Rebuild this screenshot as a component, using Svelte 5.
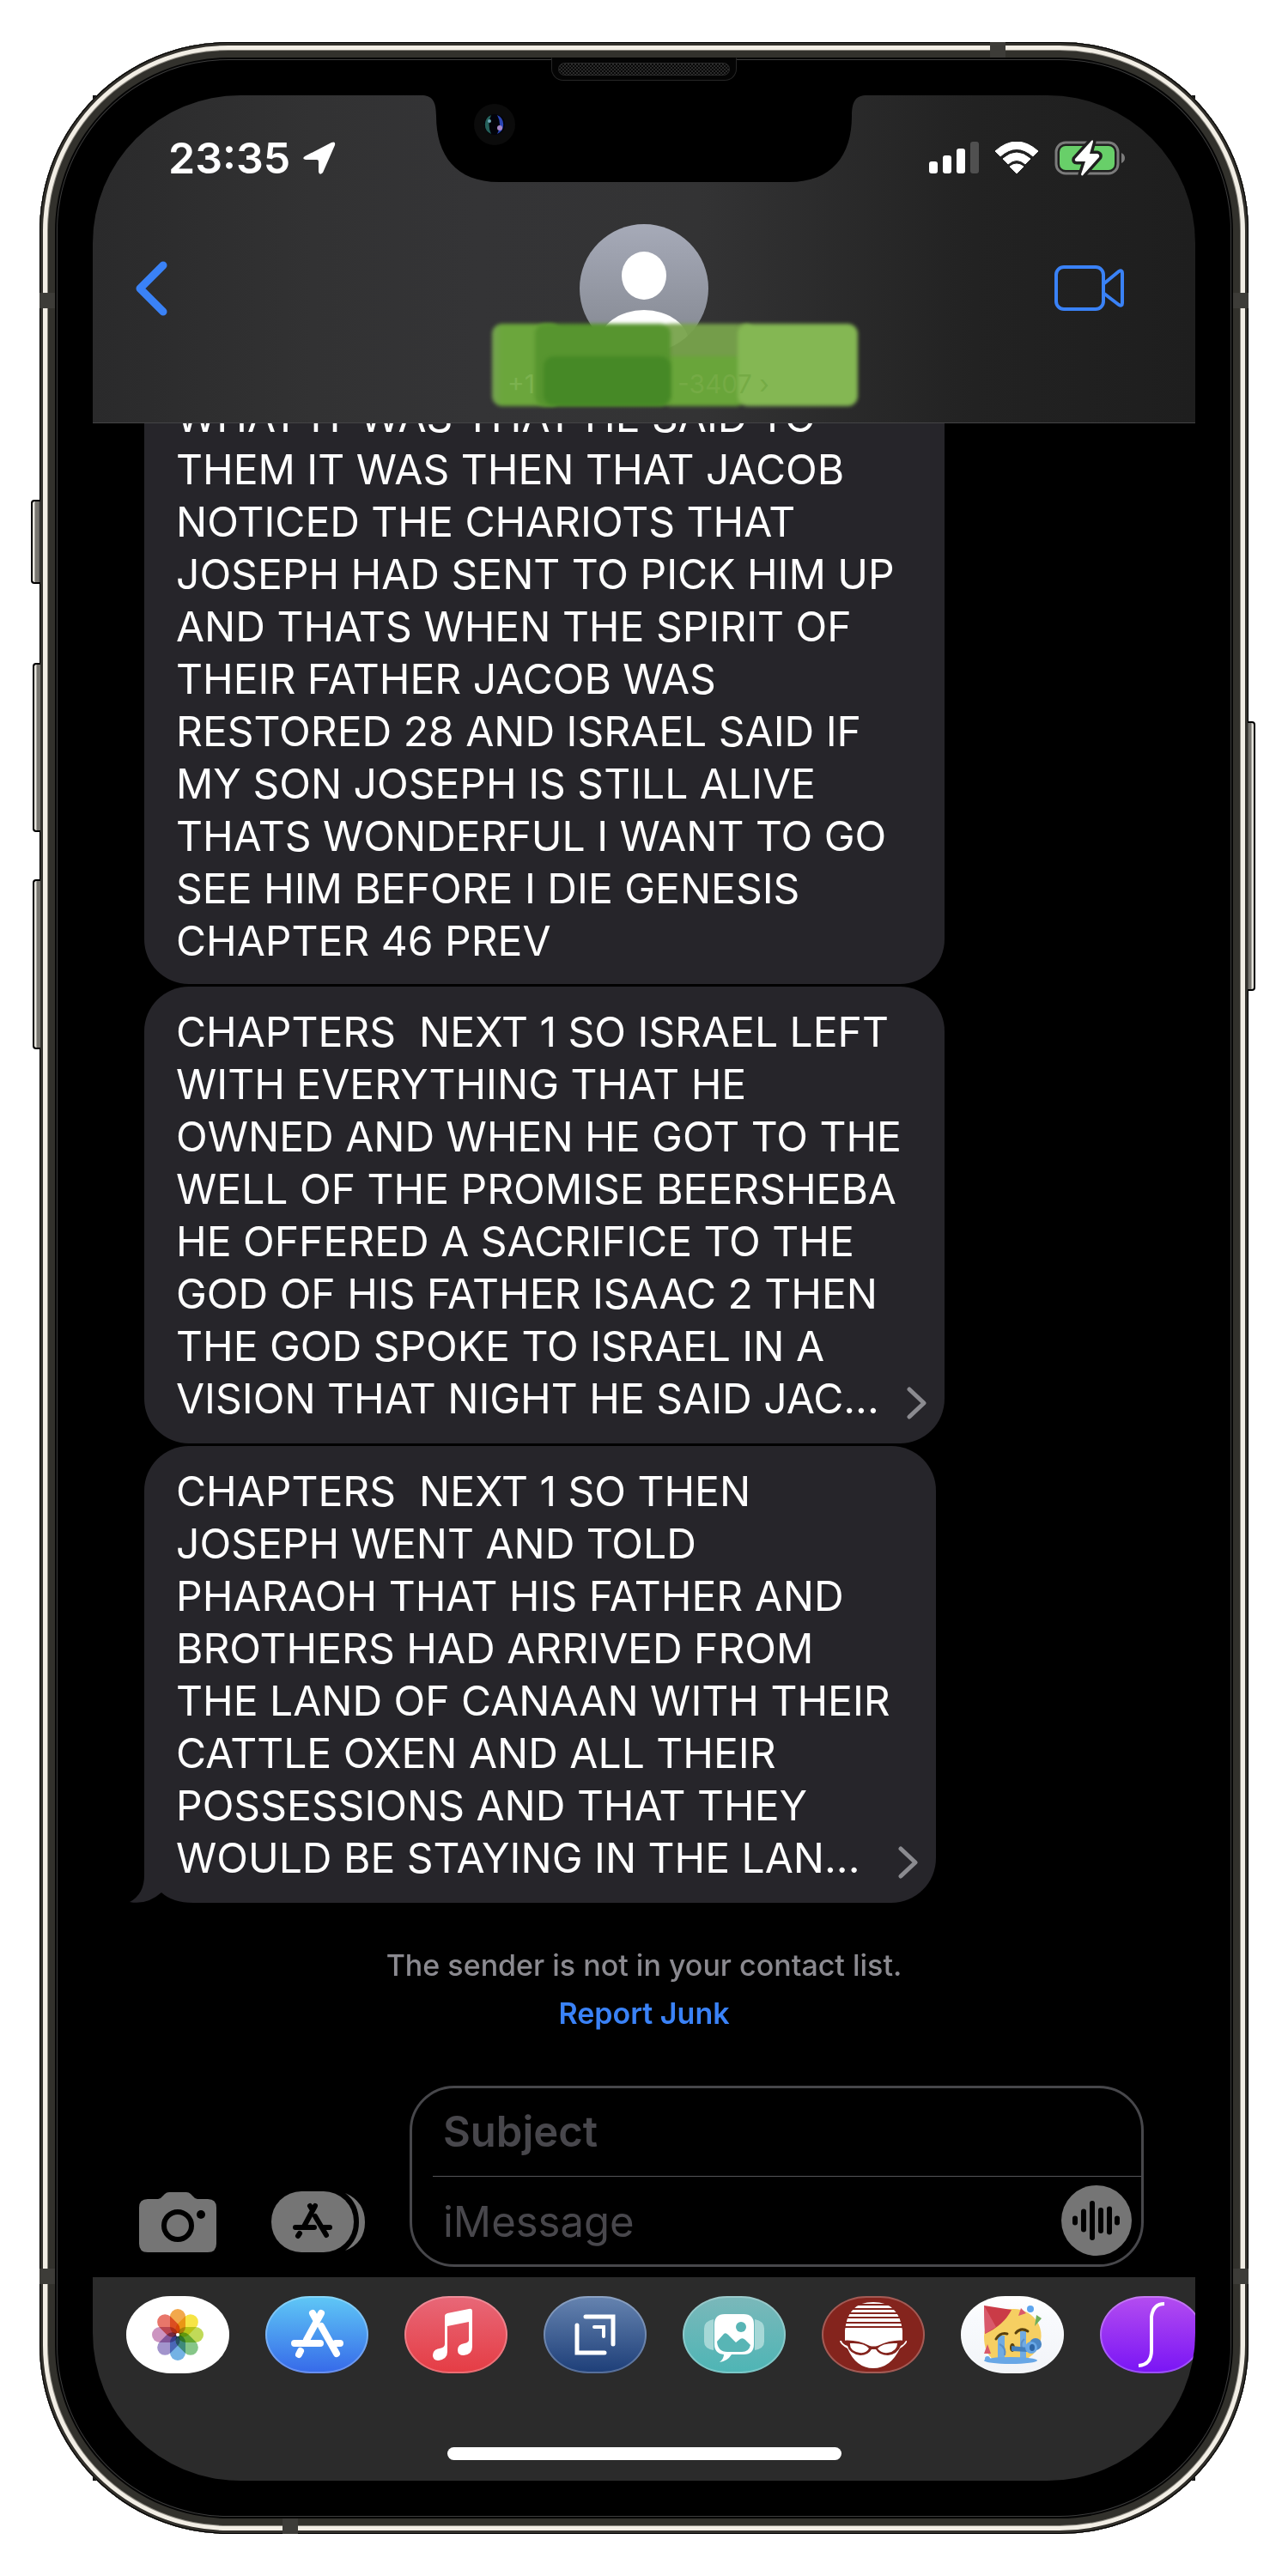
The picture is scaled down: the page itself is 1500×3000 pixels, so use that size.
<script>
  const messages = [
    {
      kind: 'cut',
      more: false,
      lines: [
        'WHAT IT WAS THAT HE SAID TO',
        'THEM IT WAS THEN THAT JACOB',
        'NOTICED THE CHARIOTS THAT',
        'JOSEPH HAD SENT TO PICK HIM UP',
        'AND THATS WHEN THE SPIRIT OF',
        'THEIR FATHER JACOB WAS',
        'RESTORED 28 AND ISRAEL SAID IF',
        'MY SON JOSEPH IS STILL ALIVE',
        'THATS WONDERFUL I WANT TO GO',
        'SEE HIM BEFORE I DIE GENESIS',
        'CHAPTER 46 PREV'
      ]
    },
    {
      kind: 'middle',
      more: true,
      lines: [
        'CHAPTERS  NEXT 1 SO ISRAEL LEFT',
        'WITH EVERYTHING THAT HE',
        'OWNED AND WHEN HE GOT TO THE',
        'WELL OF THE PROMISE BEERSHEBA',
        'HE OFFERED A SACRIFICE TO THE',
        'GOD OF HIS FATHER ISAAC 2 THEN',
        'THE GOD SPOKE TO ISRAEL IN A',
        'VISION THAT NIGHT HE SAID JAC...'
      ]
    },
    {
      kind: 'last',
      more: true,
      lines: [
        'CHAPTERS  NEXT 1 SO THEN',
        'JOSEPH WENT AND TOLD',
        'PHARAOH THAT HIS FATHER AND',
        'BROTHERS HAD ARRIVED FROM',
        'THE LAND OF CANAAN WITH THEIR',
        'CATTLE OXEN AND ALL THEIR',
        'POSSESSIONS AND THAT THEY',
        'WOULD BE STAYING IN THE LAN...'
      ]
    }
  ];

  const petals = ['#f2a84c', '#f6e445', '#c0da58', '#86c688', '#74b2e4', '#a294cc', '#cc94c0', '#e8766a'];
  const wave = [
    [16, 11], [26, 27], [36, 46], [46, 30], [56, 33], [65, 11]
  ];
</script>

<div class="page">
  <div class="phone">
    <i class="key k1"></i><i class="key k2"></i><i class="key k3"></i><i class="key k4"></i>
    <i class="band side left high"></i><i class="band side right high"></i>
    <i class="band side left low"></i><i class="band side right low"></i>
    <i class="band edge top"></i><i class="band edge bottom"></i>
    <div class="speaker"><span></span></div>

    <main class="screen">
      <header>
        <svg class="notch" viewBox="0 0 514 101" aria-hidden="true">
          <path d="M0 0C11 1 15 8 15 24C15 70 38 101 88 101H426C476 101 499 70 499 24C499 8 503 1 514 0Z" fill="#000" />
          <circle cx="83" cy="34" r="24" fill="#0b0b0b" />
          <circle cx="83" cy="34" r="12" fill="#02030a" />
          <path d="M79 23A12 12 0 0 0 79 45Q74 34 79 23" fill="#25605a" />
          <path d="M86 23A12 12 0 0 1 86 45Q92 34 86 23" fill="#2b45b4" />
          <circle cx="77" cy="30" r="2" fill="#6fa8b8" />
          <circle cx="89" cy="38" r="3" fill="#a687c8" />
        </svg>
        <div class="status">
          <div class="clock">
            <span>23:35</span>
            <svg width="40" height="40" viewBox="0 0 40 40" aria-hidden="true">
              <path d="M3 18L34 2Q39 0 38 5L24 37Q20 41 19 36V24Q19 22 17 22H4Q-1 21 3 18Z" fill="#fff" />
            </svg>
          </div>
          <div class="radios">
            <svg width="58" height="38" viewBox="0 0 58 38" aria-hidden="true">
              <rect x="0" y="23" width="10" height="14" rx="3" fill="#fff" />
              <rect x="16" y="16" width="10" height="21" rx="3" fill="#fff" />
              <rect x="32" y="8" width="10" height="29" rx="3" fill="#fff" />
              <rect x="48" y="0" width="10" height="37" rx="3" fill="#505050" />
            </svg>
            <svg width="52" height="38" viewBox="0 0 52 38" aria-hidden="true">
              <path d="M1 11Q26 -11 51 11L45 17Q26 0 7 17Z" fill="#fff" stroke="#fff" stroke-linejoin="round" />
              <path d="M10 20Q26 6 42 20L36 26Q26 17 16 26Z" fill="#fff" stroke="#fff" stroke-linejoin="round" />
              <path d="M18 29Q26 23 34 29L26 37Z" fill="#fff" stroke="#fff" stroke-linejoin="round" />
            </svg>
            <svg width="83" height="42" viewBox="0 0 83 42" aria-hidden="true">
              <rect x="2" y="3" width="72" height="36" rx="11" fill="none" stroke="#7b7b7b" stroke-width="3" />
              <path d="M78 15Q82 17 82 21Q82 25 78 27Z" fill="#7b7b7b" />
              <rect x="6" y="7" width="64" height="28" rx="7" fill="#68cf69" />
              <path d="M43 1L24 22Q23 25 26 25H36L31 40Q32 43 34 40L52 20Q53 17 50 16H41L45 2Q45 -1 43 1Z" fill="#fff" stroke="#202020" stroke-width="7" stroke-linejoin="round" paint-order="stroke" />
            </svg>
          </div>
        </div>
        <nav>
          <button class="plain" aria-label="Back">
            <svg width="38" height="64" viewBox="0 0 38 64"><path d="M33 5L6 32L33 59" fill="none" stroke="#3a82f7" stroke-width="9" stroke-linecap="round" stroke-linejoin="round" /></svg>
          </button>
          <div class="contact">
            <svg width="150" height="150" viewBox="0 0 150 150" aria-hidden="true">
              <defs>
                <linearGradient id="av" x1="0" y1="0" x2="0" y2="1"><stop offset="0" stop-color="#a6aab8" /><stop offset="1" stop-color="#82868f" /></linearGradient>
                <clipPath id="avc"><circle cx="75" cy="75" r="75" /></clipPath>
              </defs>
              <g clip-path="url(#avc)">
                <rect width="150" height="150" fill="url(#av)" />
                <ellipse cx="75" cy="60" rx="26" ry="28" fill="#fff" />
                <ellipse cx="75" cy="138" rx="52" ry="38" fill="#fff" />
              </g>
            </svg>
            <div class="marker">
              <i class="m1"></i><i class="m3"></i><i class="m4"></i><i class="m2"></i><i class="m5"></i><i class="m6"></i>
              <span class="pre">+1</span><span class="post">-3407 ›</span>
            </div>
          </div>
          <button class="plain" aria-label="Video call">
            <svg width="82" height="56" viewBox="0 0 82 56"><g fill="none" stroke="#3a82f7" stroke-width="4" stroke-linejoin="round"><rect x="3" y="3" width="55" height="49" rx="9" /><path d="M59 22L76 8Q80 6 80 10V45Q80 49 76 47L59 34" /></g></svg>
          </button>
        </nav>
      </header>

      <section class="thread">
        {#each messages as m}
          <div class="bubble {m.kind}">
            {#if m.kind === 'last'}
              <svg class="tail" width="74" height="50" viewBox="0 0 74 50" aria-hidden="true">
                <path d="M17 0V18Q17 40 0 49Q20 53 37 38Q50 50 74 50V0Z" fill="#26252a" />
              </svg>
            {/if}
            <p>{m.lines.join('\n')}</p>
            {#if m.more}
              <button class="plain more" aria-label="Show full message">
                <svg width="24" height="38" viewBox="0 0 24 38"><path d="M3 3L20 19L3 35" fill="none" stroke="#8b8b90" stroke-width="5" stroke-linecap="round" stroke-linejoin="round" /></svg>
              </button>
            {/if}
          </div>
        {/each}
      </section>

      <div class="notice">
        <p>The sender is not in your contact list.</p>
        <a href="#junk">Report Junk</a>
      </div>

      <form class="composer" onsubmit={(e) => e.preventDefault()}>
        <button type="button" class="plain tool" aria-label="Camera">
          <svg width="90" height="70" viewBox="0 0 90 70">
            <path d="M10 8H22Q25 8 27 5L30 2Q32 0 35 0H55Q58 0 60 2L63 5Q65 8 68 8H80Q90 8 90 18V60Q90 70 80 70H10Q0 70 0 60V18Q0 8 10 8Z" fill="#757575" />
            <circle cx="45" cy="39" r="16" fill="none" stroke="#000" stroke-width="6" />
            <circle cx="72" cy="26" r="5" fill="#000" />
          </svg>
        </button>
        <button type="button" class="plain tool apps" aria-label="Apps">
          <svg width="110" height="72" viewBox="0 0 110 72">
            <rect x="0" y="0" width="96" height="71" rx="35" fill="#757575" />
            <path d="M86 2Q109 12 109 36Q109 60 86 69Q102 56 102 36Q102 14 86 2Z" fill="#757575" />
            <g stroke="#000" stroke-width="6" stroke-linecap="round" fill="none">
              <path d="M51 17L38 41M45 17L48 22M51 29L64 51M28 42H50M60 42H68M33 49L31 52" />
            </g>
          </svg>
        </button>
        <div class="box">
          <input class="subject" aria-label="Subject" placeholder="Subject" />
          <hr />
          <div class="line">
            <input aria-label="iMessage" placeholder="iMessage" />
            <button type="button" class="plain mic" aria-label="Record audio">
              <svg width="82" height="82" viewBox="0 0 82 82">
                <circle cx="41" cy="41" r="41" fill="#757575" />
                {#each wave as [x, h]}
                  <rect x={x - 3} y={41 - h / 2} width="6" height={h} rx="3" fill="#000" />
                {/each}
              </svg>
            </button>
          </div>
        </div>
      </form>

      <footer>
        <div class="dock">
          <button class="app photos" aria-label="Photos">
            <svg viewBox="0 0 120 90">
              <g class="petals">
                {#each petals as c, i}
                  <rect x="51" y="15" width="18" height="30" rx="9" fill={c} transform="rotate({i * 45} 60 45)" />
                {/each}
              </g>
              <circle cx="60" cy="45" r="2" fill="#fff" />
            </svg>
          </button>
          <button class="app store" aria-label="App Store">
            <svg viewBox="0 0 120 90">
              <g stroke="#fff" stroke-width="8" stroke-linecap="round" fill="none">
                <path d="M65 20L48 51M55 20L60 29M34 55H64M82 55H87M41 64L39 68" />
                <path d="M65 35L83 67" />
              </g>
            </svg>
          </button>
          <button class="app music" aria-label="Music">
            <svg viewBox="0 0 120 90">
              <path d="M47 23Q47 21 50 20L75 15Q79 14 79 18V59Q79 68 69 69Q62 69 62 63Q62 56 70 55Q75 54 75 51V30L50 35V65Q50 73 40 75Q33 75 33 69Q33 62 41 61Q47 60 47 56Z" fill="#fff" />
            </svg>
          </button>
          <button class="app drafts" aria-label="Screens">
            <svg viewBox="0 0 120 90">
              <g fill="none" stroke="#fff" stroke-linecap="round"><path d="M49 24H81V56M39 34V66H71" stroke-width="5" /><path d="M59 36H70V47" stroke-width="4" /></g>
            </svg>
          </button>
          <button class="app stickers" aria-label="Stickers">
            <svg viewBox="0 0 120 90">
              <path d="M36 27Q25 29 25 38V53Q25 61 36 63ZM84 27Q95 29 95 38V53Q95 61 84 63Z" fill="#a6d8d7" />
              <path d="M49 21H71Q83 21 83 33V56Q83 68 71 68H57Q52 76 43 77Q48 73 48 68Q37 67 37 56V33Q37 21 49 21Z" fill="#fff" />
              <circle cx="68" cy="36" r="6" fill="#58b5b5" />
              <path d="M40 53L48 44Q50 42 53 45L62 54L67 50Q70 48 73 51L79 57Q77 65 69 65H52Q41 65 40 53Z" fill="#58b5b5" />
            </svg>
          </button>
          <button class="app heads" aria-label="Characters">
            <svg viewBox="0 0 120 90">
              <path d="M27 52V40Q30 7 60 7Q90 7 94 40V52L99 52Q100 55 91 61Q80 84 60 84Q40 84 30 61Q21 56 21 52Z" fill="#fff" />
              <path d="M40 10H80M34 15H86M30 20H90M28 25H92M27 31H94M27 36H94" stroke="#84241d" stroke-width="2" />
              <path d="M23 52Q40 50 56 58Q60 59 65 58Q82 50 98 52Q96 56 92 58Q88 68 77 69Q67 69 63 62H58Q54 69 45 69Q32 67 30 58Q24 56 23 52Z" fill="#84241d" />
              <path d="M33 55Q50 54 55 61Q52 67 44 66Q32 64 33 55ZM88 55Q71 54 65 61Q69 67 77 66Q88 64 88 55Z" fill="#fff" />
            </svg>
          </button>
          <button class="app party" aria-label="Emoji mix">
            <svg viewBox="0 0 120 90">
              <path d="M59 15A32 31 0 0 1 84 68L76 74H38Q27 66 27 47A32 32 0 0 1 59 15Z" fill="#f6cf62" />
              <path d="M27 11L59 16Q50 34 28 44Z" fill="#ca3b47" /><path d="M27 11L41 36L28 44Z" fill="#d9596b" />
              <path d="M43 46H51V73H43ZM69 41H76V73H69Z" fill="#70abe3" />
              <path d="M45 56Q53 60 51 69M74 50Q69 54 71 60" fill="none" stroke="#5c8fc7" stroke-width="2" />
              <ellipse cx="58" cy="75" rx="31" ry="4" fill="#68a7e6" /><circle cx="31" cy="73" r="3" fill="#68a7e6" />
              <path d="M41 50Q46 42 54 44M64 43Q70 36 78 41" fill="none" stroke="#59400d" stroke-width="3" stroke-linecap="round" />
              <ellipse cx="60" cy="60" rx="3" ry="5" fill="#59400d" />
              <path d="M59 58L78 60V65L59 64Z" fill="#437fbd" />
              <ellipse cx="87" cy="56" rx="7" ry="7" fill="#4a86c5" />
              <circle cx="82" cy="60" r="7" fill="#68a7e6" /><ellipse cx="83" cy="60" rx="3" ry="4" fill="#2d65a5" />
              <circle cx="81" cy="15" r="4" fill="#5da5ee" />
              <path d="M70 14L76 20L67 23ZM31 56L35 67H27Z" fill="#d9596b" /><path d="M88 22L94 26L86 35Z" fill="#6eae5a" />
            </svg>
          </button>
          <button class="app integral" aria-label="Calculator">
            <svg viewBox="0 0 120 90"><path d="M75 9Q62 9 60 24V63Q60 80 45 81" fill="none" stroke="#fff" stroke-width="4" /></svg>
          </button>
        </div>
        <div class="home"></div>
      </footer>
    </main>
  </div>
</div>

<style>
  :global(body) { background: #fff; }
  * { box-sizing: border-box; }
  p { margin: 0; }
  .page {
    font-family: Inter, 'Liberation Sans', sans-serif;
    padding: 49px 46px 50px;
  }
  .plain {
    display: block;
    padding: 0;
    border: 0;
    background: none;
    cursor: pointer;
  }
  svg { display: block; flex: none; }

  .phone {
    position: relative;
    padding: 62px;
    border-radius: 220px;
    background: #000;
    box-shadow:
      inset 0 0 0 1px #000,
      inset 0 0 0 4px #33312c,
      inset 0 0 0 9px #f2eee5,
      inset 0 0 0 10px #8b8880,
      inset 0 0 0 18px #32312c,
      inset 0 0 0 20px #050505,
      inset 0 0 0 21px #3c3c3c;
  }
  .phone::before {
    content: '';
    position: absolute;
    inset: 62px 62px;
    z-index: -1;
    background: #161616;
  }
  .key {
    position: absolute;
    width: 11px;
    left: -10px;
    border: 2px solid #000;
    border-right: 0;
    border-radius: 4px 0 0 4px;
    background: linear-gradient(90deg, #e5e3dc 0 2px, #77756f 3px 7px, #222);
  }
  .k1 { top: 533px; height: 98px; }
  .k2 { top: 723px; height: 197px; left: -8px; width: 9px; }
  .k3 { top: 975px; height: 198px; left: -8px; width: 9px; }
  .k4 {
    top: 791px;
    height: 314px;
    left: auto;
    right: -8px;
    width: 9px;
    border: 2px solid #000;
    border-left: 0;
    border-radius: 0 4px 4px 0;
    background: linear-gradient(270deg, #e5e3dc 0 2px, #77756f 3px 6px, #222);
  }
  .band { position: absolute; width: 18px; height: 18px; background: #3d3c38; }
  .left { left: 0; }
  .right { right: 0; }
  .high { top: 292px; }
  .low { bottom: 291px; }
  .top { top: 0; right: 283px; }
  .bottom { bottom: 0; left: 283px; }
  .speaker {
    position: absolute;
    top: 18px;
    left: 50%;
    width: 216px;
    height: 27px;
    margin-left: -108px;
    padding: 5px 7px;
    border: 1px solid #262626;
    border-top-color: #000;
    border-radius: 0 0 14px 14px;
    background: #040404;
  }
  .speaker span {
    display: block;
    height: 15px;
    border: 1px solid #2a2a2a;
    border-radius: 8px;
    background: repeating-conic-gradient(#2b2b2b 0 25%, #080808 0 50%) 0 0 / 4px 4px;
  }

  .screen {
    position: relative;
    display: flex;
    flex-direction: column;
    overflow: hidden;
    border-radius: 172px;
    background: #000;
    color: #fff;
  }
  header {
    position: relative;
    z-index: 2;
    padding-bottom: 81px;
    border-bottom: 1px solid #444446;
    background: linear-gradient(90deg, #2a2a2b, #323233 20%, #343436 35%, #333334 55%, #222 80%, #1e1e1e);
  }
  .notch {
    position: absolute;
    top: 0;
    left: 50%;
    width: 514px;
    height: 101px;
    margin-left: -257px;
  }
  .status {
    display: flex;
    justify-content: space-between;
    align-items: center;
    padding: 46px 81px 0 88px;
    height: 100px;
  }
  .clock, .radios { display: flex; align-items: center; }
  .clock { gap: 14px; font-size: 50px; line-height: 54px; font-weight: 600; }
  .radios { gap: 18px; }
  nav {
    display: grid;
    grid-template-columns: 1fr auto 1fr;
    align-items: center;
    padding-top: 50px;
  }
  nav > :first-child { justify-self: start; margin-left: 49px; }
  nav > :last-child { justify-self: end; margin-right: 83px; }
  .contact { position: relative; }
  .marker {
    position: absolute;
    top: 116px;
    left: 50%;
    width: 426px;
    height: 96px;
    margin-left: -177px;
    color: #7cb24f;
    font-size: 30px;
    line-height: 32px;
  }
  .marker i { position: absolute; filter: blur(2px); border-radius: 12px; }
  .m1 { left: 0; top: 0; width: 80px; height: 96px; background: linear-gradient(90deg, #76a353, #6ba63c 12px); }
  .m3 { left: 196px; top: 0; width: 110px; height: 60px; background: #78a34cf2; }
  .m4 { left: 196px; top: 38px; width: 100px; height: 58px; background: #69a53a; }
  .m2 { left: 50px; top: 0; width: 158px; height: 96px; background: #57952f; }
  .m5 { left: 60px; top: 38px; width: 148px; height: 57px; background: #468926; }
  .m6 { left: 286px; top: 0; width: 140px; height: 96px; background: #84b753; }
  .marker span { position: absolute; top: 54px; }
  .pre { left: 18px; }
  .post { left: 216px; color: #75ab45; }

  .thread {
    display: flex;
    flex-direction: column;
    align-items: flex-start;
    gap: 3px;
    margin-top: -38px;
    padding-left: 60px;
  }
  .bubble {
    position: relative;
    width: 932px;
    max-width: 90%;
    padding: 22px 37px;
    border-radius: 52px;
    background: #26252a;
  }
  .bubble.cut { padding-top: 0; padding-bottom: 20px; border-radius: 0 0 52px 52px; }
  .bubble p {
    position: relative;
    font-size: 48px;
    line-height: 61px;
    white-space: pre;
  }
  .more { position: absolute; right: 20px; bottom: 28px; }
  .bubble.last {
    width: 922px;
    border-bottom-left-radius: 0;
    background:
      linear-gradient(#26252a, #26252a) 0 0 / 100% calc(100% - 50px) no-repeat,
      linear-gradient(#26252a, #26252a) 56px 100% / 100% 50px no-repeat;
  }
  .tail { position: absolute; left: -17px; bottom: 0; }

  .notice {
    display: flex;
    flex-direction: column;
    align-items: center;
    padding: 45px 0 56px;
    color: #8b8a90;
    font-size: 34px;
    line-height: 56px;
    font-weight: 500;
  }
  .notice a { color: #3a82f7; font-weight: 600; text-decoration: none; }

  .composer {
    display: flex;
    align-items: flex-end;
    padding: 0 60px 12px 54px;
  }
  .tool { margin: 0 64px 17px 0; }
  .apps { margin: 0 51px 16px 0; }
  .box {
    flex: 1;
    min-width: 0;
    border: 3px solid #47474b;
    border-radius: 52px;
  }
  .box hr { height: 1px; margin: 0 0 0 24px; border: 0; background: #555558; }
  .line { display: flex; align-items: center; padding-right: 11px; }
  input {
    flex: 1;
    width: 100%;
    min-width: 0;
    height: 102px;
    padding: 2px 0 0 36px;
    border: 0;
    outline: 0;
    background: none;
    color: #fff;
    font: 400 49px/61px Inter, 'Liberation Sans', sans-serif;
  }
  input::placeholder { color: #48474c; opacity: 1; }
  .subject { display: block; padding: 0 36px 2px; font-weight: 600; }

  footer {
    padding: 22px 0 24px;
    background: #2b2b2b;
  }
  .dock { display: flex; gap: 42px; padding-left: 39px; overflow: hidden; }
  .app {
    flex: none;
    width: 120px;
    height: 90px;
    padding: 0;
    border: 0;
    border-radius: 52px / 45px;
    overflow: hidden;
    box-shadow: inset 0 0 0 2px #ffffff40;
    cursor: pointer;
  }
  .app svg { width: 120px; height: 90px; }
  .photos { background: #fff; }
  .petals { isolation: isolate; }
  .petals rect { mix-blend-mode: multiply; }
  .store { background: linear-gradient(#5fc8f6, #3669e9); }
  .music { background: linear-gradient(#e86878, #e53c44); }
  .drafts { background: linear-gradient(#6684b0, #1d3e78); }
  .stickers { background: linear-gradient(#7bb8ba, #4eb5b5); }
  .heads { background: #84241d; }
  .party { background: linear-gradient(#fff, #f8fafd 30%, #f2f4f8); }
  .integral { background: linear-gradient(#b44df0, #7914f5); }
  .home {
    width: 459px;
    max-width: 60%;
    height: 15px;
    margin: 86px auto 0;
    border-radius: 8px;
    background: #fff;
  }
</style>
